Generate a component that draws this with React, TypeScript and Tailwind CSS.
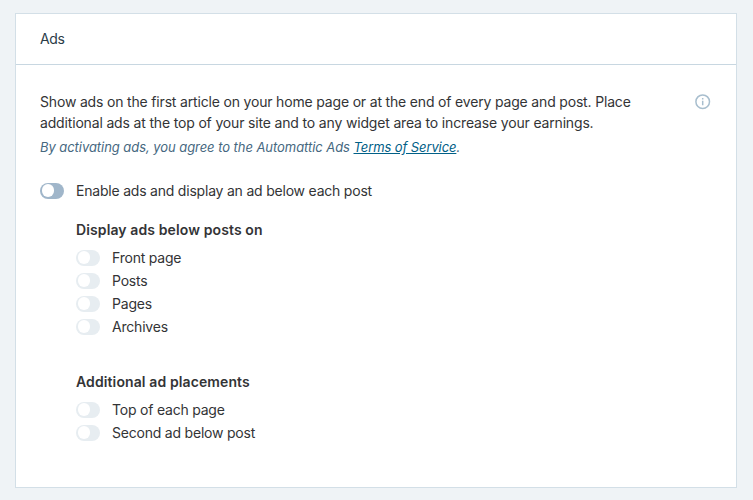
import React from 'react';
import { clsx } from 'clsx';

type ToggleProps = {
  label: string;
  disabled?: boolean;
};

const POST_LOCATIONS = ['Front page', 'Posts', 'Pages', 'Archives'];
const PLACEMENTS = ['Top of each page', 'Second ad below post'];

const Toggle = ({ label, disabled }: ToggleProps) => (
  <label className="flex h-[23px] items-center gap-3 tracking-[-0.21px]">
    <input type="checkbox" role="switch" className="sr-only" disabled={disabled} />
    <span
      className={clsx(
        'flex h-4 w-6 items-center rounded-full p-[1.75px]',
        disabled ? 'bg-[#e7edf1]' : 'bg-[#a0b6ca]',
      )}
    >
      <span className="size-[12.5px] rounded-full bg-white" />
    </span>
    <span>{label}</span>
  </label>
);

const ToggleGroup = ({ title, items }: { title: string; items: string[] }) => (
  <fieldset className="pl-9">
    <legend className="mb-[5px] font-semibold leading-[23px] tracking-[0.11px]">{title}</legend>
    {items.map(item => (
      <Toggle key={item} label={item} disabled />
    ))}
  </fieldset>
);

const InfoIcon = () => (
  <svg viewBox="0 0 16 16" className="size-4" fill="none" stroke="#a8bece" strokeWidth="1.5">
    <circle cx="7.7" cy="7.7" r="6.8" />
    <path d="M7.7 6.8v4.4M7.7 4.1v1.5" />
  </svg>
);

export default function App() {
  return (
    <div className="h-[500px] bg-[#eff3f6] px-[15px] pt-[13px] font-['Inter',sans-serif] text-[14px] tracking-[-0.175px] text-[#333436]">
      <section className="h-[475px] w-[722px] border border-[#d3dfe7] bg-white">
        <header className="flex h-[51px] items-center border-b border-[#c8d7e1] px-6 pb-0.5 tracking-[-0.4px] text-[#2b3c48]">
          Ads
        </header>
        <div className="px-6 pt-[26px]">
          <div className="flex justify-between">
            <p className="w-[610px] leading-[21px]">
              Show ads on the first article on your home page or at the end of every page and post. Place
              <br />
              <span className="tracking-[-0.165px]">
                additional ads at the top of your site and to any widget area to increase your earnings.
              </span>
            </p>
            <button type="button" aria-label="More information" className="mt-[3px] mr-px size-4">
              <InfoIcon />
            </button>
          </div>
          <p className="mt-1 text-[13px] leading-[20px] tracking-[-0.055px] text-[#46687f] italic">
            By activating ads, you agree to the Automattic Ads{' '}
            <a href="#tos" className="tracking-[-0.1px] text-[#016087] underline">
              Terms of Service
            </a>
            .
          </p>
          <div className="mt-[22px]">
            <Toggle label="Enable ads and display an ad below each post" />
          </div>
          <div className="mt-4 flex flex-col gap-8">
            <ToggleGroup title="Display ads below posts on" items={POST_LOCATIONS} />
            <ToggleGroup title="Additional ad placements" items={PLACEMENTS} />
          </div>
        </div>
      </section>
    </div>
  );
}
